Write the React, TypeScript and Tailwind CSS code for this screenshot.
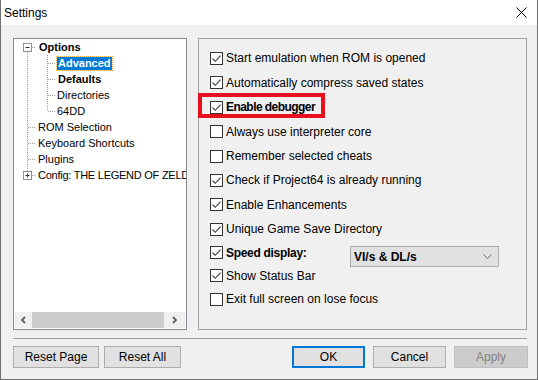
import React from 'react';

const ui = { fontFamily: '"Liberation Sans", Arial, sans-serif' };

const Check: React.FC<{ checked: boolean }> = ({ checked }) => (
  <div className="w-[13px] h-[13px] border border-[#333333] bg-white flex items-center justify-center shrink-0">
    {checked && (
      <svg width="11" height="11" viewBox="0 0 11 11">
        <path d="M1.5 5.5 L4.2 8.3 L9.6 2.6" fill="none" stroke="#3c3c3c" strokeWidth="1.1" />
      </svg>
    )}
  </div>
);

interface Opt {
  label: string;
  checked: boolean;
  bold?: boolean;
  h: string;
}

const OPTIONS: Opt[] = [
  { label: 'Start emulation when ROM is opened', checked: true, h: 'h-[24px]' },
  { label: 'Automatically compress saved states', checked: true, h: 'h-[25px]' },
  { label: 'Enable debugger', checked: true, bold: true, h: 'h-[24px]' },
  { label: 'Always use interpreter core', checked: false, h: 'h-[25px]' },
  { label: 'Remember selected cheats', checked: false, h: 'h-[24px]' },
  { label: 'Check if Project64 is already running', checked: true, h: 'h-[24px]' },
  { label: 'Enable Enhancements', checked: true, h: 'h-[25px]' },
  { label: 'Unique Game Save Directory', checked: true, h: 'h-[24px]' },
];

const TreeRow: React.FC<{ indent: string; bold?: boolean; selected?: boolean; children: React.ReactNode }> = ({
  indent,
  bold,
  selected,
  children,
}) => (
  <div className={`h-[16px] flex items-center whitespace-nowrap ${indent}`}>
    <span
      className={`leading-[13px] px-[1px] ${bold ? 'font-bold' : ''} ${
        selected ? 'bg-[#0078d7] text-white outline outline-1 outline-dotted outline-[#f0a030]' : 'text-black'
      }`}
    >
      {children}
    </span>
  </div>
);

const Btn: React.FC<{ w: string; variant?: 'default' | 'disabled'; children: React.ReactNode }> = ({
  w,
  variant,
  children,
}) => {
  const cls =
    variant === 'default'
      ? 'bg-[#e1e1e1] border-2 border-[#0078d7] text-black'
      : variant === 'disabled'
      ? 'bg-[#cccccc] border border-[#bfbfbf] text-[#838383]'
      : 'bg-[#e1e1e1] border border-[#adadad] text-black';
  return <div className={`${w} h-[22px] flex items-center justify-center text-[12px] ${cls}`}>{children}</div>;
};

export default function App() {
  return (
    <div
      className="w-[538px] h-[380px] flex flex-col bg-[#f0f0f0] border-x border-b border-[#707070] overflow-hidden"
      style={ui}
    >
      {/* title bar */}
      <div className="h-[25px] bg-white flex items-center justify-between pl-[3px] pr-[10px] shrink-0">
        <span className="text-[12px] text-black">Settings</span>
        <svg width="11" height="11" viewBox="0 0 11 11">
          <path d="M0.5 0.5 L10.5 10.5 M10.5 0.5 L0.5 10.5" stroke="#000" strokeWidth="1" />
        </svg>
      </div>

      <div className="flex-1 flex flex-col pl-[12px] pt-[13px]">
        <div className="flex gap-[11px]">
          {/* tree */}
          <div className="w-[174px] h-[292px] bg-white border border-[#828790] flex flex-col overflow-hidden">
            <div className="relative flex-1 overflow-hidden text-[11px]">
              <svg className="absolute left-0 top-0" width="172" height="180">
                <g stroke="#a0a0a0" strokeWidth="1" strokeDasharray="1 1" fill="none">
                  <path d="M13.5 13 V132" />
                  <path d="M18 8.5 H22" />
                  <path d="M14 88.5 H22 M14 104.5 H22 M14 120.5 H22" />
                  <path d="M18 136.5 H22" />
                  <path d="M33.5 16 V72" />
                  <path d="M34 24.5 H42 M34 40.5 H42 M34 56.5 H42 M34 72.5 H42" />
                </g>
                <rect x="9.5" y="4.5" width="8" height="8" fill="#fff" stroke="#919191" />
                <path d="M11.5 8.5 H15.5" stroke="#333" />
                <rect x="9.5" y="132.5" width="8" height="8" fill="#fff" stroke="#919191" />
                <path d="M11.5 136.5 H15.5 M13.5 134.5 V138.5" stroke="#333" />
              </svg>
              <div className="relative">
                <TreeRow indent="pl-[24px]" bold>Options</TreeRow>
                <TreeRow indent="pl-[43px]" bold selected>Advanced</TreeRow>
                <TreeRow indent="pl-[43px]" bold>Defaults</TreeRow>
                <TreeRow indent="pl-[42px]">Directories</TreeRow>
                <TreeRow indent="pl-[42px]">64DD</TreeRow>
                <TreeRow indent="pl-[23px]">ROM Selection</TreeRow>
                <TreeRow indent="pl-[23px]">Keyboard Shortcuts</TreeRow>
                <TreeRow indent="pl-[23px]">Plugins</TreeRow>
                <TreeRow indent="pl-[23px]">
                  <span className="tracking-[-0.25px]">Config: THE LEGEND OF ZELDA</span>
                </TreeRow>
              </div>
            </div>
            {/* horizontal scrollbar */}
            <div className="h-[16px] mx-[1px] mb-[1px] bg-[#f0f0f0] flex items-center">
              <div className="w-[17px] h-full flex items-center justify-center">
                <svg width="7" height="8" viewBox="0 0 7 8">
                  <path d="M5 1 L2 4 L5 7" fill="none" stroke="#606060" strokeWidth="1.8" />
                </svg>
              </div>
              <div className="w-[132px] h-full bg-[#cdcdcd]" />
              <div className="flex-1 h-full flex items-center justify-center">
                <svg width="7" height="8" viewBox="0 0 7 8">
                  <path d="M2 1 L5 4 L2 7" fill="none" stroke="#606060" strokeWidth="1.8" />
                </svg>
              </div>
            </div>
          </div>

          {/* options panel */}
          <div className="relative w-[329px] h-[292px] border border-[#a0a0a0] pl-[11px] pt-[7px] text-[12px] text-black">
            {OPTIONS.map((o) => (
              <div key={o.label} className={`${o.h} flex items-center gap-[3px] whitespace-nowrap`}>
                <Check checked={o.checked} />
                <span className={o.bold ? 'font-bold tracking-[-0.55px]' : ''}>{o.label}</span>
              </div>
            ))}
            <div className="h-[23px] flex items-center whitespace-nowrap">
              <div className="flex items-center gap-[3px] w-[140px]">
                <Check checked />
                <span className="font-bold tracking-[-0.3px]">Speed display:</span>
              </div>
              <div className="w-[149px] h-[21px] mt-[8px] bg-[#e1e1e1] border border-[#adadad] flex items-center justify-between pl-[3px] pr-[6px]">
                <span className="font-bold">VI/s &amp; DL/s</span>
                <svg width="9" height="5" viewBox="0 0 9 5">
                  <path d="M0.5 0.5 L4.5 4.5 L8.5 0.5" fill="none" stroke="#606060" strokeWidth="1" />
                </svg>
              </div>
            </div>
            <div className="h-[23px] flex items-center gap-[3px] whitespace-nowrap">
              <Check checked />
              <span>Show Status Bar</span>
            </div>
            <div className="h-[24px] flex items-center gap-[3px] whitespace-nowrap">
              <Check checked={false} />
              <span>Exit full screen on lose focus</span>
            </div>

            {/* highlight box */}
            <div className="absolute top-[54px] left-[-1px] w-[127px] h-[25px] border-[4px] border-[#e8101e]" />
          </div>
        </div>

        <div className="mt-[8px] w-[514px] h-px bg-[#a0a0a0]" />

        <div className="mt-[7px] flex w-[515px]">
          <Btn w="w-[86px]">Reset Page</Btn>
          <div className="w-[5px]" />
          <Btn w="w-[77px]">Reset All</Btn>
          <div className="flex-1" />
          <Btn w="w-[73px]" variant="default">OK</Btn>
          <div className="w-[8px]" />
          <Btn w="w-[73px]">Cancel</Btn>
          <div className="w-[8px]" />
          <Btn w="w-[74px]" variant="disabled">Apply</Btn>
        </div>
      </div>
    </div>
  );
}
